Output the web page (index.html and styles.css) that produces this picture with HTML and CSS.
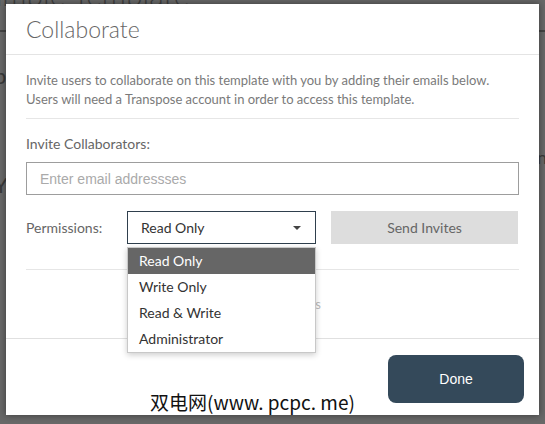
FILE: index.html
```html
<!DOCTYPE html>
<html lang="en">
<head>
<meta charset="utf-8">
<title>Collaborate</title>
<link rel="stylesheet" href="styles.css">
</head>
<body>
<div class="page">
  <div class="page-title">Sample Template</div>
  <div class="page-rule"></div>
  <div class="page-line p1">p</div>
  <div class="page-line p2">Y</div>
  <div class="page-line p3">f</div>
  <div class="page-side">ne</div>
</div>

<div class="modal">
  <div class="modal-header">
    <h1 class="modal-title">Collaborate</h1>
  </div>
  <div class="modal-body">
    <p class="intro">Invite users to collaborate on this template with you by adding their emails below. Users will need a Transpose account in order to access this template.</p>
    <div class="rule"></div>
    <label class="field-label">Invite Collaborators:</label>
    <div class="email-input">Enter email addressses</div>
    <div class="perm-row">
      <span class="perm-label">Permissions:</span>
      <div class="select-wrap">
        <div class="select">
          <span>Read Only</span>
          <span class="caret"></span>
        </div>
        <ul class="dropdown">
          <li class="option active">Read Only</li>
          <li class="option">Write Only</li>
          <li class="option">Read &amp; Write</li>
          <li class="option">Administrator</li>
        </ul>
      </div>
      <div class="send-btn">Send Invites</div>
    </div>
    <div class="rule rule-2"></div>
    <div class="empty">No Collaborators</div>
  </div>
  <div class="modal-footer">
    <div class="done-btn">Done</div>
  </div>
  <div class="watermark">双电网(www. pcpc. me)</div>
</div>
</body>
</html>
```

FILE: styles.css
```css
html, body {
  margin: 0;
  padding: 0;
}
body {
  width: 545px;
  height: 424px;
  overflow: hidden;
  background: #686868;
  font-family: Lato, "Noto Sans", sans-serif;
  position: relative;
}
.page {
  position: relative;
  height: 424px;
  color: #3c3c3c;
}
.page-title {
  font-size: 30px;
  font-weight: 300;
  margin-top: -24px;
  margin-left: -28px;
  color: #3e3e3e;
}
.page-rule {
  height: 2px;
  width: 545px;
  background: #444;
  margin-top: 18px;
}
.page-line {
  font-size: 22px;
  margin-left: -6px;
  color: #3a3a3a;
}
.p1 { margin-top: 30px; }
.p2 { margin-top: 82px; }
.p3 { margin-top: 18px; font-size: 12px; margin-left: 8px; }
.page-side {
  position: absolute;
  left: 537px;
  top: 170px;
  font-size: 18px;
  color: #3a3a3a;
}

.modal {
  position: absolute;
  left: 6px;
  top: 4px;
  width: 533px;
  height: 411px;
  background: #fff;
  box-shadow: 0 0 7px rgba(0, 0, 0, 0.45);
  display: flex;
  flex-direction: column;
}
.modal-header {
  height: 50px;
  border-bottom: 1px solid #e4e4e4;
  padding: 0 20px;
  display: flex;
  align-items: center;
}
.modal-title {
  margin: 0;
  font-size: 23px;
  font-weight: 300;
  color: #666;
  line-height: 1;
}
.modal-body {
  padding: 16px 20px 0 20px;
  height: 284px;
  box-sizing: border-box;
  border-bottom: 1px solid #e0e0e0;
}
.intro {
  margin: 0;
  font-size: 13px;
  line-height: 19px;
  color: #7a7a7a;
}
.rule {
  height: 1px;
  background: #e6e6e6;
  margin-top: 9px;
}
.field-label {
  display: block;
  margin-top: 15px;
  font-size: 14px;
  line-height: 19px;
  color: #666;
}
.email-input {
  margin-top: 9px;
  height: 33px;
  box-sizing: border-box;
  border: 1px solid #9d9d9d;
  padding-left: 13px;
  display: flex;
  align-items: center;
  font-family: "Liberation Sans", Arial, sans-serif;
  font-size: 14px;
  color: #aaa;
}
.perm-row {
  margin-top: 16px;
  display: flex;
  align-items: center;
  height: 33px;
}
.perm-label {
  width: 101px;
  font-size: 14px;
  color: #666;
}
.select-wrap {
  position: relative;
  width: 189px;
  height: 33px;
}
.select {
  height: 33px;
  box-sizing: border-box;
  border: 1px solid #2f3f4d;
  padding: 0 14px 0 13px;
  display: flex;
  align-items: center;
  justify-content: space-between;
  font-size: 14px;
  color: #333;
}
.caret {
  width: 0;
  height: 0;
  border-left: 4px solid transparent;
  border-right: 4px solid transparent;
  border-top: 4px solid #444;
  margin-top: 1px;
}
.dropdown {
  position: absolute;
  left: 0;
  top: 36px;
  width: 189px;
  box-sizing: border-box;
  margin: 0;
  padding: 0;
  list-style: none;
  background: #fff;
  border: 1px solid #c8c8c8;
  box-shadow: 0 2px 6px rgba(0, 0, 0, 0.2);
  z-index: 2;
}
.option {
  height: 26px;
  line-height: 26px;
  padding-left: 11px;
  font-size: 14px;
  color: #333;
}
.option.active {
  background: #666;
  color: #fff;
}
.send-btn {
  margin-left: 15px;
  width: 187px;
  height: 33px;
  background: #ddd;
  display: flex;
  align-items: center;
  justify-content: center;
  font-size: 14px;
  color: #666;
}
.rule-2 {
  margin-top: 25px;
}
.empty {
  margin-top: 25px;
  text-align: center;
  font-size: 13px;
  line-height: 19px;
  color: #bbb;
}
.modal-footer {
  flex: 1;
  display: flex;
  justify-content: flex-end;
  padding: 16px 15px 0 0;
}
.done-btn {
  width: 136px;
  height: 48px;
  border-radius: 8px;
  background: #34495a;
  color: #fff;
  font-family: "Liberation Sans", Arial, sans-serif;
  font-size: 14px;
  display: flex;
  align-items: center;
  justify-content: center;
}
.watermark {
  position: absolute;
  left: 144px;
  top: 386px;
  font-family: "Noto Sans CJK SC", "Noto Sans", sans-serif;
  font-size: 19px;
  line-height: 24px;
  color: #111;
  white-space: nowrap;
}
```
